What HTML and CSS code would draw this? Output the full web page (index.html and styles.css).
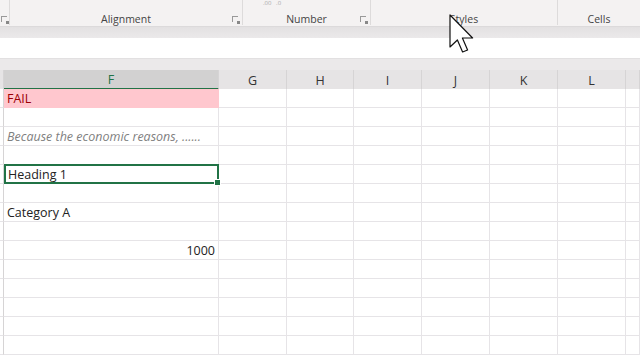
FILE: index.html
```html
<!DOCTYPE html>
<html>
  <head>
    <meta charset="UTF-8">
    <title>Sheet</title>
    <link rel="stylesheet" href="styles.css">
  </head>
  <body>
    <div class="app">
      <!-- Ribbon group labels -->
      <div class="ribbon">
        <div class="group g-font"><span class="launch"></span></div>
        <div class="group g-align">Alignment<span class="launch"></span></div>
        <div class="group g-number"><span class="tiny">.00 &nbsp; .0</span>Number<span class="launch"></span></div>
        <div class="group g-styles">Styles</div>
        <div class="group g-cells">Cells</div>
      </div>
      <div class="shade"></div>
      <div class="formula"></div>
      <div class="gap"></div>

      <!-- Grid -->
      <div class="sheet">
        <div class="hd corner"></div>
        <div class="hd sel">F</div>
        <div class="hd">G</div>
        <div class="hd">H</div>
        <div class="hd">I</div>
        <div class="hd">J</div>
        <div class="hd">K</div>
        <div class="hd">L</div>
        <div class="hd"></div>
      </div>
      <div class="rows" id="rows"></div>

      <svg class="cursor" width="26" height="40" viewBox="0 0 13 20">
        <path d="M0.5 0.5 L0.5 16.5 L4.2 13 L6.8 19 L9.3 18 L6.7 12 L11.8 12 Z" fill="#fff" stroke="#111" stroke-width="0.6" stroke-linejoin="round"/>
      </svg>
    </div>

    <script>
      // cell contents for column F, everything else empty
      var data = [
        ["FAIL", "bad"],
        ["", ""],
        ["Because the economic reasons, ......", "expl"],
        ["", ""],
        ["Heading 1", "active"],
        ["", ""],
        ["Category A", ""],
        ["", ""],
        ["1000", "num"],
        ["", ""], ["", ""], ["", ""], ["", ""], ["", ""]
      ];
      var rows = document.getElementById("rows");
      data.forEach(function (d) {
        var r = document.createElement("div");
        r.className = "row";
        var html = '<div class="c rh"></div><div class="c f ' + d[1] + '">' + d[0] + '</div>';
        for (var i = 0; i < 7; i++) html += '<div class="c"></div>';
        r.innerHTML = html;
        rows.appendChild(r);
      });
    </script>
  </body>
</html>
```

FILE: styles.css
```css
body {
  margin: 0;
  font-family: "Open Sans", "Liberation Sans", sans-serif;
  background: #fff;
  overflow: hidden;
}
.app {
  position: relative;
  width: 640px;
  height: 360px;
  overflow: hidden;
}
.ribbon {
  display: flex;
  height: 27px;
  background: #f4f2f2;
  border-bottom: 1px solid #dcdadb;
  box-sizing: border-box;
}
.group {
  position: relative;
  display: flex;
  align-items: flex-end;
  justify-content: center;
  font-size: 10.5px;
  line-height: 11px;
  color: #444;
  border-right: 1px solid #dddbdb;
  margin-bottom: 1px;
  box-sizing: border-box;
}
.g-font { width: 10px; }
.g-align { width: 233px; }
.g-number { width: 128px; }
.g-styles { width: 187px; }
.g-cells { flex: 1; border-right: none; }
.launch {
  position: absolute;
  right: 4px;
  bottom: 3px;
  width: 5px;
  height: 5px;
  border-top: 1px solid #999;
  border-left: 1px solid #999;
}
.launch::after {
  content: "";
  position: absolute;
  right: -2px;
  bottom: -2px;
  width: 3px;
  height: 3px;
  background: #888;
}
.g-font .launch { right: 2px; }
.tiny {
  position: absolute;
  top: 0;
  left: 20px;
  font-size: 6px;
  line-height: 6px;
  color: #aaa;
}
.shade {
  height: 11px;
  background: linear-gradient(#e3e1e2, #ebe9ea);
}
.formula {
  height: 20px;
  background: #fff;
  border-bottom: 1px solid #e2e0e1;
}
.gap {
  height: 11px;
  background: #ebe9ea;
}
.sheet, .row {
  display: grid;
  grid-template-columns: 4px 215px 68px 67px 68px 68px 68px 68px 14px;
}
.sheet {
  height: 19px;
  background: #e6e4e5;
}
.hd {
  display: flex;
  align-items: center;
  justify-content: center;
  padding-top: 1px;
  font-size: 12.5px;
  color: #333;
  border-right: 1px solid #d6d4d5;
  box-sizing: border-box;
}
.hd.sel {
  background: #d2d1d1;
  color: #217346;
  border-bottom: 2px solid #217346;
}
.row {
  height: 19px;
}
.c {
  border-right: 1px solid #e6e4e7;
  border-bottom: 1px solid #e6e4e7;
  box-sizing: border-box;
  font-size: 12.5px;
  line-height: 16px;
  padding: 2px 3px 0;
  white-space: nowrap;
  color: #222;
}
.c.rh { padding: 0; border-right-color: #d6d4d5; }
.c.bad {
  background: #ffc7ce;
  color: #9c0006;
  border-color: #ffc7ce;
}
.c.expl {
  font-style: italic;
  color: #7f7f7f;
}
.c.active {
  position: relative;
  border: 2px solid #217346;
  line-height: 16px;
  padding: 1px 2px 0;
  margin: -1px 0 0 0;
  height: 20px;
}
.c.active::after {
  content: "";
  position: absolute;
  right: -4px;
  bottom: -4px;
  width: 5px;
  height: 5px;
  background: #217346;
  border: 1px solid #fff;
}
.c.num { text-align: right; }
.cursor {
  position: absolute;
  left: 449px;
  top: 14px;
}
```
